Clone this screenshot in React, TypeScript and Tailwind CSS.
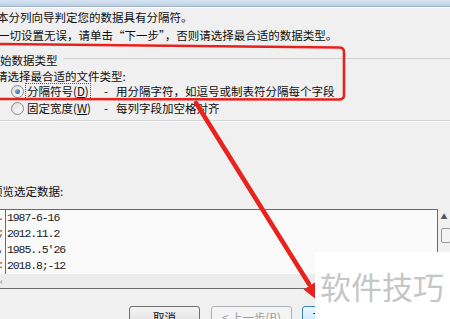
import React from "react";

const Radio = ({ checked }: { checked?: boolean }) => (
  <span className="relative ml-[11px] h-[13px] w-[13px] shrink-0 rounded-full border border-[#8b8b8b] bg-gradient-to-br from-[#dcdcdc] to-[#ffffff]">
    {checked && (
      <span className="absolute left-[3px] top-[3px] h-[5px] w-[5px] rounded-full bg-gradient-to-br from-[#8cc3f0] to-[#1d5aa6]" />
    )}
  </span>
);

export default function App() {
  const rows = [
    { mark: ".", value: "1987-6-16" },
    { mark: ";", value: "2012.11.2" },
    { mark: ",", value: "1985..5'26" },
    { mark: ":", value: "2018.8;-12" },
  ];

  return (
    <div className="relative h-[319px] w-[450px] overflow-hidden bg-[#f0f0f0] font-['Noto_Sans_CJK_SC',sans-serif] text-[11.5px] text-[#0e0e0e]">
      {/* title bar edge */}
      <div className="h-[7px] border-b border-[#9db1c9] bg-gradient-to-b from-[#d8e4f2] to-[#bdd0e7]" />
      <div className="h-px bg-white" />

      <div className="flex flex-col">
        <p className="-ml-[3px] h-[18px] whitespace-nowrap leading-[18px]">
          本分列向导判定您的数据具有分隔符。
        </p>
        <p className="-ml-[2px] h-[18px] whitespace-nowrap leading-[18px]">
          一切设置无误，请单击“下一步”，否则请选择最合适的数据类型。
        </p>

        {/* group box header */}
        <div className="mt-[7px] -ml-[11.5px] flex h-[18px] items-center gap-[5px]">
          <span className="whitespace-nowrap leading-[18px]">原始数据类型</span>
          <div className="-mt-[3px] flex-1 border-t border-[#d3d3d3]" />
        </div>
        <p className="-ml-[4px] h-[14px] whitespace-nowrap leading-[14px]">
          请选择最合适的文件类型:
        </p>

        <div className="flex h-[17px] items-center whitespace-nowrap">
          <Radio checked />
          <span className="ml-[1px] flex w-[79px] items-center">
            <span className="border border-dotted border-[#555] px-[1px] py-[1px] leading-[13px]">
              分隔符号(<span className="underline">D</span>)
            </span>
          </span>
          <span>-</span>
          <span className="ml-[8px]">用分隔字符，如逗号或制表符分隔每个字段</span>
        </div>
        <div className="flex h-[17px] items-center whitespace-nowrap">
          <Radio />
          <span className="ml-[3px] w-[77px]">
            固定宽度(<span className="underline">W</span>)
          </span>
          <span>-</span>
          <span className="ml-[8px]">每列字段加空格对齐</span>
        </div>

        <div className="mt-[3px] border-t border-b border-t-[#d3d3d3] border-b-white" />

        <p className="mt-[60px] -ml-[9px] h-[18px] whitespace-nowrap leading-[18px]">
          预览选定数据:
        </p>

        {/* preview */}
        <div className="mt-[9px] flex h-[80px]">
          <div className="-ml-[10px] flex w-[451px] flex-col border border-[#6a6a6a] bg-[#fafafa]">
            <div className="flex flex-col">
              {rows.map((r, i) => (
                <div key={i} className="flex h-[16px] items-center">
                  <span className="h-full w-[15px] border-r border-[#6a6a6a] pr-[1px] text-right font-['Liberation_Mono',monospace] text-[10px] leading-[16px] text-[#444]">
                    {r.mark}
                  </span>
                  <span className="pl-[1px] font-['Liberation_Mono',monospace] text-[11.5px] leading-[16px] tracking-[-1.1px] text-[#1a1a1a]">
                    {r.value}
                  </span>
                </div>
              ))}
            </div>
            <div className="flex h-[14px] items-center bg-[#ececec] pl-[9px] text-[9px] leading-none text-[#777]">
              ‹
            </div>
          </div>
          <div className="flex w-[12px] flex-col items-center pt-[3px]">
            <span className="text-[7px] leading-[8px] text-[#555]">▲</span>
            <span className="mt-[8px] ml-[4px] h-[15px] w-[10px] rounded-[2px] border border-[#9a9a9a] bg-[#f4f4f4]" />
          </div>
        </div>

        {/* buttons */}
        <div className="mt-[17px] flex h-[22px]">
          <div className="ml-[129px] h-[22px] w-[71px] rounded-[3px] border border-[#707070] bg-gradient-to-b from-[#f4f4f4] to-[#dcdcdc] text-center leading-[20px]">
            取消
          </div>
          <div className="ml-[11px] h-[22px] w-[81px] rounded-[3px] border border-[#adb2b5] bg-[#f4f4f4] text-center leading-[20px] text-[#9c9c9c]">
            &lt; 上一步(<span className="underline">B</span>)
          </div>
          <div className="ml-[10px] h-[22px] w-[81px] rounded-[3px] border border-[#3c7fb1] bg-gradient-to-b from-[#eaf6fd] to-[#bee6fd] text-center leading-[20px]">
            下一步(<span className="underline">N</span>) &gt;
          </div>
        </div>
      </div>

      {/* red annotation */}
      <svg className="pointer-events-none absolute left-0 top-0" width="450" height="319" viewBox="0 0 450 319">
        <path
          d="M -6 44 L 339 47.5 Q 344 47.5 344 52 L 344 95 Q 344 99.5 339 99.5 L -6 99"
          fill="none"
          stroke="#e5221c"
          strokeWidth="2.6"
          strokeLinejoin="round"
        />
        <line x1="196" y1="103" x2="309" y2="284" stroke="#e8231d" strokeWidth="4.5" strokeLinecap="round" />
        <polygon points="303.6,289.5 317.2,281.1 322,304" fill="#e8231d" />
      </svg>

      {/* watermark */}
      <div className="absolute left-[315px] top-[252px] flex h-[67px] w-[135px] items-center bg-white pl-[5px]">
        <span className="whitespace-nowrap text-[31px] leading-none text-[#c6c6c6]">软件技巧</span>
      </div>
    </div>
  );
}
